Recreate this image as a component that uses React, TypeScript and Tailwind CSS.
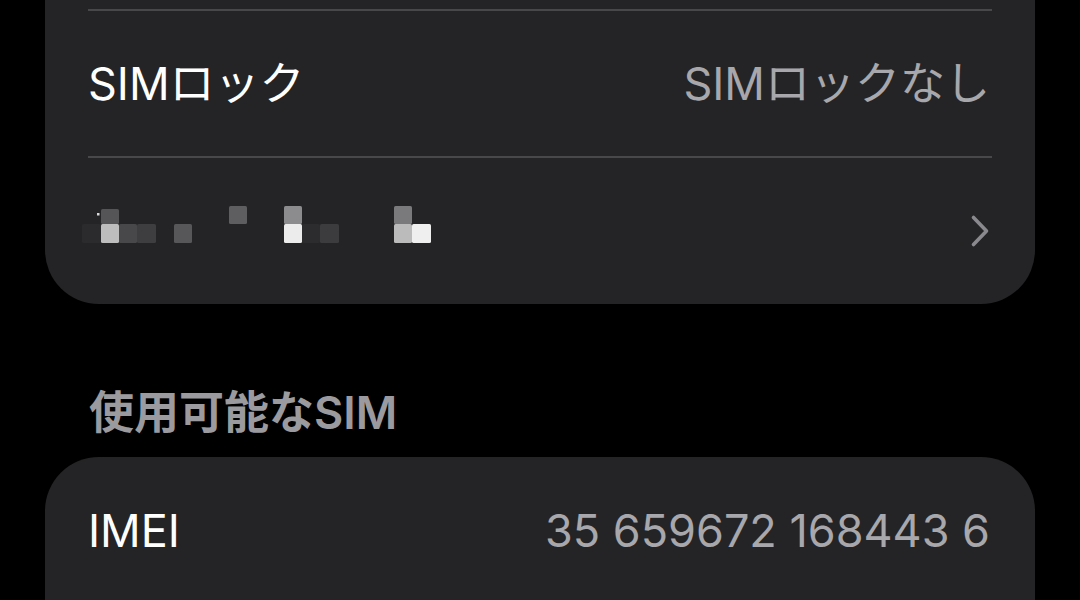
import React from 'react';

// Mosaic blocks that hide the carrier name in the second row.
const mosaic: { x: number; y: number; w: number; h: number; c: string }[] = [
  { x: 0, y: 19, w: 19, h: 19, c: '#2b2b2d' },
  { x: 19, y: 4, w: 18, h: 15, c: '#555557' },
  { x: 19, y: 19, w: 18, h: 19, c: '#bdbdbd' },
  { x: 37, y: 19, w: 18, h: 19, c: '#48484a' },
  { x: 55, y: 19, w: 19, h: 19, c: '#3e3e40' },
  { x: 92, y: 19, w: 18, h: 19, c: '#575759' },
  { x: 147, y: 1, w: 18, h: 18, c: '#5e5e60' },
  { x: 202, y: 1, w: 18, h: 18, c: '#8c8c8e' },
  { x: 202, y: 19, w: 18, h: 19, c: '#ececec' },
  { x: 220, y: 19, w: 18, h: 19, c: '#2c2c2e' },
  { x: 238, y: 19, w: 19, h: 19, c: '#3c3c3e' },
  { x: 312, y: 1, w: 18, h: 18, c: '#7a7a7c' },
  { x: 312, y: 19, w: 18, h: 19, c: '#bbbbbb' },
  { x: 330, y: 19, w: 19, h: 19, c: '#efefef' },
];

function Divider() {
  return <div className="mx-[43px] h-[2px] bg-[#48484b]" />;
}

function Chevron() {
  return (
    <svg width="20" height="34" viewBox="0 0 20 34" fill="none">
      <path
        d="M3.5 3.5 L16.5 17 L3.5 30.5"
        stroke="#8a8a8e"
        strokeWidth="3.6"
        strokeLinecap="round"
        strokeLinejoin="round"
      />
    </svg>
  );
}

export default function App() {
  return (
    <div className="h-[600px] w-[1080px] overflow-hidden bg-black font-[Inter,'Noto_Sans_CJK_JP',sans-serif] text-[45px] leading-[54px]">
      {/* SIM card group */}
      <div className="mx-[45px] rounded-b-[54px] bg-[#242426] pt-[9px]">
        <Divider />
        <div className="flex h-[145px] items-center justify-between pl-[43px] pr-[45px]">
          <span className="text-white">SIMロック</span>
          <span className="text-[#a7a7ac]">SIMロックなし</span>
        </div>
        <Divider />
        <div className="flex h-[146px] items-center justify-between pl-[37px] pr-[45px]">
          <svg width="350" height="40" viewBox="0 0 350 40" className="mb-[12px]">
            {mosaic.map((m, i) => (
              <rect key={i} x={m.x} y={m.y} width={m.w} height={m.h} rx="1.5" fill={m.c} />
            ))}
            <rect x="15" y="8" width="2.5" height="2.5" fill="#d8d8d8" />
          </svg>
          <Chevron />
        </div>
      </div>

      {/* Section header */}
      <div className="pl-[89px] pt-[82px] pb-[17px] font-semibold text-[#9a9a9f]">使用可能なSIM</div>

      {/* IMEI group */}
      <div className="mx-[45px] h-[200px] rounded-t-[54px] bg-[#242426]">
        <div className="flex h-[148px] items-center justify-between pl-[43px] pr-[45px]">
          <span className="text-white">IMEI</span>
          <span className="text-[#a7a7ac]">35 659672 168443 6</span>
        </div>
      </div>
    </div>
  );
}
